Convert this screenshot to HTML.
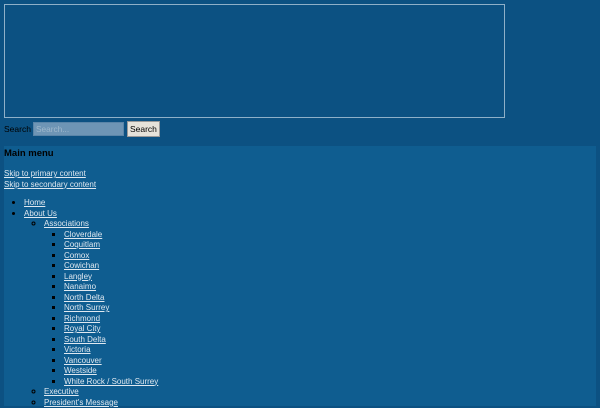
<!DOCTYPE html><html><head><style>
body{margin:0;background:#0c5182;font-family:"Liberation Sans",sans-serif;font-size:8px;color:#000;width:600px;height:400px;overflow:hidden}
.box{position:absolute;left:4px;top:4px;width:501px;height:114px;border:1px solid #8fb0c8;box-sizing:border-box}
.search{position:absolute;left:4px;top:121px;height:16px;display:flex;align-items:center;font-size:8.5px}
.search input{width:85px;height:12px;margin:0 3px 0 2px;background:#6e95b5;border:1px solid #5a85a8;padding:0 2px;font-size:8.3px;color:#9fb8cc}
.search button{height:16px;width:33px;padding:0;background:#e6e2da;border:1px solid #999;font-size:8.5px;font-family:inherit}
.menu{position:absolute;left:4px;top:146px;width:592px;height:260px;background:#0f5d90}
h3{margin:0;position:absolute;left:0;top:2px;font-size:9.5px;font-weight:bold}
a{color:#dfe8f0}
.skip{position:absolute;left:0;top:23px;line-height:10.5px}
ul{margin:0;padding-left:20px;line-height:10.5px}
li::marker{font-size:10px}
.top{position:absolute;left:0;top:52px}
ul ul{list-style:circle}ul ul ul{list-style:square}
</style></head><body>
<div class="box"></div>
<div class="search">Search<input value="Search..."><button>Search</button></div>
<div class="menu"><h3>Main menu</h3>
<div class="skip"><a href="#">Skip to primary content</a><br><a href="#">Skip to secondary content</a></div>
<ul class="top"><li><a href="#">Home</a></li><li><a href="#">About Us</a>
<ul><li><a href="#">Associations</a><ul>
<li><a href="#">Cloverdale</a></li><li><a href="#">Coquitlam</a></li><li><a href="#">Comox</a></li><li><a href="#">Cowichan</a></li><li><a href="#">Langley</a></li><li><a href="#">Nanaimo</a></li><li><a href="#">North Delta</a></li><li><a href="#">North Surrey</a></li><li><a href="#">Richmond</a></li><li><a href="#">Royal City</a></li><li><a href="#">South Delta</a></li><li><a href="#">Victoria</a></li><li><a href="#">Vancouver</a></li><li><a href="#">Westside</a></li><li><a href="#">White Rock / South Surrey</a></li></ul></li>
<li><a href="#">Executive</a></li><li><a href="#">President's Message</a></li></ul></li></ul>
</div>
</body></html>
